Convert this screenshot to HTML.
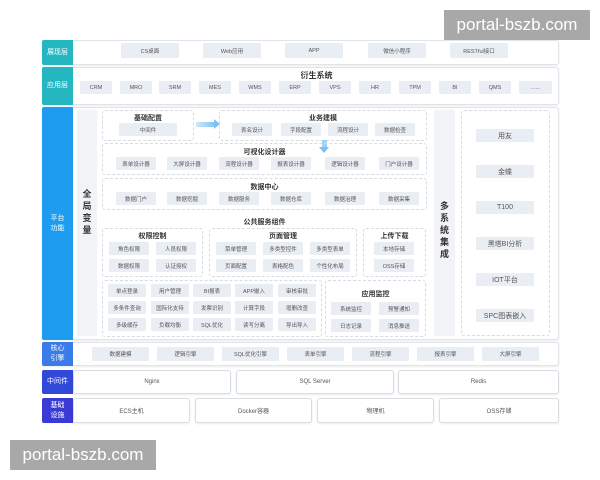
<!DOCTYPE html><html><head><meta charset="utf-8"><style>
*{margin:0;padding:0;box-sizing:border-box}
body{width:600px;height:480px;background:#fff;position:relative;overflow:hidden;font-family:"Liberation Sans","Noto Sans CJK SC",sans-serif;color:#333}
div{position:absolute}
.row{left:42px;width:517px;border:1px solid #dfe3ea;border-radius:3px;background:#fff;box-shadow:0 1px 2px rgba(0,0,0,.08)}
.lab{left:42px;width:31px;color:#fff;font-size:7px;display:flex;align-items:center;justify-content:center;text-align:center;line-height:10px;border-radius:2px 0 0 2px}
.it{background:#e9edf4;font-size:5.5px;color:#555;display:flex;align-items:center;justify-content:center;white-space:nowrap;border-radius:1px}
.db{border:1px dashed #d6dbe3;border-radius:3px}
.t{font-size:7px;font-weight:bold;color:#333;text-align:center;white-space:nowrap}
.wb{background:#fff;border:1px solid #d8dce3;border-radius:3px;font-size:6px;color:#555;display:flex;align-items:center;justify-content:center;box-shadow:0 1px 2px rgba(0,0,0,.08)}
.wm{background:#a8a8a8;color:#fff;font-size:17px;display:flex;align-items:center;justify-content:center}
</style></head><body>
<!-- row1 -->
<div class="row" style="top:40px;height:25px"></div>
<div class="lab" style="top:40px;height:25px;background:#24b7c2">展现层</div>
<div class="it" style="left:121px;top:43px;width:58px;height:15px">CS桌面</div>
<div class="it" style="left:203px;top:43px;width:58px;height:15px">Web应用</div>
<div class="it" style="left:285px;top:43px;width:58px;height:15px">APP</div>
<div class="it" style="left:368px;top:43px;width:58px;height:15px">微信小程序</div>
<div class="it" style="left:450px;top:43px;width:58px;height:15px">RESTful接口</div>
<!-- row2 -->
<div class="row" style="top:67px;height:38px"></div>
<div class="lab" style="top:67px;height:38px;background:#24b7c2">应用层</div>
<div class="t" style="left:74px;width:485px;top:70px;font-size:8px">衍生系统</div>
<div class="it" style="left:80px;top:81px;width:32px;height:13px">CRM</div>
<div class="it" style="left:120px;top:81px;width:32px;height:13px">MRO</div>
<div class="it" style="left:159px;top:81px;width:32px;height:13px">SRM</div>
<div class="it" style="left:199px;top:81px;width:32px;height:13px">MES</div>
<div class="it" style="left:239px;top:81px;width:32px;height:13px">WMS</div>
<div class="it" style="left:279px;top:81px;width:32px;height:13px">ERP</div>
<div class="it" style="left:319px;top:81px;width:32px;height:13px">VPS</div>
<div class="it" style="left:359px;top:81px;width:32px;height:13px">HR</div>
<div class="it" style="left:399px;top:81px;width:32px;height:13px">TPM</div>
<div class="it" style="left:439px;top:81px;width:32px;height:13px">BI</div>
<div class="it" style="left:479px;top:81px;width:32px;height:13px">QMS</div>
<div class="it" style="left:519px;top:81px;width:33px;height:13px">......</div>
<!-- platform -->
<div class="row" style="top:107px;height:233px"></div>
<div class="lab" style="top:107px;height:233px;background:#1e9df0">平台<br>功能</div>
<div style="left:77px;top:110px;width:20px;height:226px;background:#f1f3f7"></div>
<div class="t" style="left:77px;top:188px;width:20px;font-size:9px;line-height:12px">全<br>局<br>变<br>量</div>
<div class="db" style="left:102px;top:110px;width:92px;height:31px"></div>
<div class="t" style="left:102px;top:113px;width:92px">基础配置</div>
<div class="it" style="left:119px;top:123px;width:58px;height:13px">中间件</div>
<div style="left:196px;top:122px;width:20px;height:5px;background:linear-gradient(90deg,#cfe8f8,#7cc2f0)"></div>
<div style="left:214px;top:119px;width:0;height:0;border-left:6px solid #7cc2f0;border-top:5px solid transparent;border-bottom:5px solid transparent"></div>
<div class="db" style="left:219px;top:110px;width:208px;height:31px"></div>
<div class="t" style="left:219px;top:113px;width:208px">业务建模</div>
<div class="it" style="left:232px;top:123px;width:40px;height:13px">表名设计</div>
<div class="it" style="left:281px;top:123px;width:40px;height:13px">字段配置</div>
<div class="it" style="left:328px;top:123px;width:40px;height:13px">流程设计</div>
<div class="it" style="left:375px;top:123px;width:40px;height:13px">数据检查</div>
<div style="left:322px;top:140px;width:5px;height:7px;background:#9fd2f4"></div>
<div style="left:319px;top:147px;width:0;height:0;border-top:6px solid #7cc2f0;border-left:5.5px solid transparent;border-right:5.5px solid transparent"></div>
<div class="db" style="left:102px;top:143px;width:325px;height:32px"></div>
<div class="t" style="left:102px;top:147px;width:325px">可视化设计器</div>
<div class="it" style="left:116px;top:157px;width:40px;height:13px">表单设计器</div>
<div class="it" style="left:167px;top:157px;width:40px;height:13px">大屏设计器</div>
<div class="it" style="left:219px;top:157px;width:40px;height:13px">流程设计器</div>
<div class="it" style="left:271px;top:157px;width:40px;height:13px">报表设计器</div>
<div class="it" style="left:325px;top:157px;width:40px;height:13px">逻辑设计器</div>
<div class="it" style="left:379px;top:157px;width:40px;height:13px">门户设计器</div>
<div class="db" style="left:102px;top:178px;width:325px;height:32px"></div>
<div class="t" style="left:102px;top:182px;width:325px">数据中心</div>
<div class="it" style="left:116px;top:192px;width:40px;height:13px">数据门户</div>
<div class="it" style="left:167px;top:192px;width:40px;height:13px">数据挖掘</div>
<div class="it" style="left:219px;top:192px;width:40px;height:13px">数据服务</div>
<div class="it" style="left:271px;top:192px;width:40px;height:13px">数据仓库</div>
<div class="it" style="left:325px;top:192px;width:40px;height:13px">数据治理</div>
<div class="it" style="left:379px;top:192px;width:40px;height:13px">数据采集</div>
<div class="t" style="left:102px;top:217px;width:325px">公共服务组件</div>
<div class="db" style="left:102px;top:228px;width:101px;height:49px"></div>
<div class="t" style="left:102px;top:231px;width:101px">权限控制</div>
<div class="it" style="left:109px;top:242px;width:40px;height:13px">角色权限</div>
<div class="it" style="left:156px;top:242px;width:40px;height:13px">人员权限</div>
<div class="it" style="left:109px;top:259px;width:40px;height:13px">数据权限</div>
<div class="it" style="left:156px;top:259px;width:40px;height:13px">认证授权</div>
<div class="db" style="left:209px;top:228px;width:148px;height:49px"></div>
<div class="t" style="left:209px;top:231px;width:148px">页面管理</div>
<div class="it" style="left:216px;top:242px;width:40px;height:13px">菜单管理</div>
<div class="it" style="left:263px;top:242px;width:40px;height:13px">多类型控件</div>
<div class="it" style="left:310px;top:242px;width:40px;height:13px">多类型表单</div>
<div class="it" style="left:216px;top:259px;width:40px;height:13px">页面配置</div>
<div class="it" style="left:263px;top:259px;width:40px;height:13px">表格配色</div>
<div class="it" style="left:310px;top:259px;width:40px;height:13px">个性化布局</div>
<div class="db" style="left:363px;top:228px;width:63px;height:49px"></div>
<div class="t" style="left:363px;top:231px;width:63px">上传下载</div>
<div class="it" style="left:374px;top:242px;width:40px;height:13px">本地存储</div>
<div class="it" style="left:374px;top:259px;width:40px;height:13px">OSS存储</div>
<div class="db" style="left:102px;top:280px;width:220px;height:57px"></div>
<div class="it" style="left:108px;top:284px;width:38px;height:13px">单点登录</div>
<div class="it" style="left:151px;top:284px;width:38px;height:13px">用户管理</div>
<div class="it" style="left:193px;top:284px;width:38px;height:13px">BI报表</div>
<div class="it" style="left:235px;top:284px;width:38px;height:13px">APP嵌入</div>
<div class="it" style="left:278px;top:284px;width:38px;height:13px">审核审批</div>
<div class="it" style="left:108px;top:301px;width:38px;height:13px">多条件查询</div>
<div class="it" style="left:151px;top:301px;width:38px;height:13px">国际化支持</div>
<div class="it" style="left:193px;top:301px;width:38px;height:13px">发票识别</div>
<div class="it" style="left:235px;top:301px;width:38px;height:13px">计算字段</div>
<div class="it" style="left:278px;top:301px;width:38px;height:13px">增删改查</div>
<div class="it" style="left:108px;top:318px;width:38px;height:13px">多级缓存</div>
<div class="it" style="left:151px;top:318px;width:38px;height:13px">负载均衡</div>
<div class="it" style="left:193px;top:318px;width:38px;height:13px">SQL优化</div>
<div class="it" style="left:235px;top:318px;width:38px;height:13px">读写分离</div>
<div class="it" style="left:278px;top:318px;width:38px;height:13px">导出导入</div>
<div class="db" style="left:325px;top:280px;width:101px;height:57px"></div>
<div class="t" style="left:325px;top:289px;width:101px">应用监控</div>
<div class="it" style="left:331px;top:302px;width:40px;height:13px">系统监控</div>
<div class="it" style="left:379px;top:302px;width:40px;height:13px">预警通知</div>
<div class="it" style="left:331px;top:319px;width:40px;height:13px">日志记录</div>
<div class="it" style="left:379px;top:319px;width:40px;height:13px">消息推送</div>
<div style="left:434px;top:110px;width:21px;height:226px;background:#f1f3f7"></div>
<div class="t" style="left:434px;top:200px;width:21px;font-size:9px;line-height:12px">多<br>系<br>统<br>集<br>成</div>
<div class="db" style="left:461px;top:110px;width:89px;height:226px"></div>
<div class="it" style="left:476px;top:129px;width:58px;height:13px;font-size:7px">用友</div>
<div class="it" style="left:476px;top:165px;width:58px;height:13px;font-size:7px">金蝶</div>
<div class="it" style="left:476px;top:201px;width:58px;height:13px;font-size:7px">T100</div>
<div class="it" style="left:476px;top:237px;width:58px;height:13px;font-size:7px">黑塔BI分析</div>
<div class="it" style="left:476px;top:273px;width:58px;height:13px;font-size:7px">IOT平台</div>
<div class="it" style="left:476px;top:309px;width:58px;height:13px;font-size:7px">SPC图表嵌入</div>
<!-- core -->
<div class="row" style="top:342px;height:24px"></div>
<div class="lab" style="top:342px;height:24px;background:#3b7be8">核心<br>引擎</div>
<div class="it" style="left:92px;top:347px;width:57px;height:14px">数据建模</div>
<div class="it" style="left:157px;top:347px;width:57px;height:14px">逻辑引擎</div>
<div class="it" style="left:222px;top:347px;width:57px;height:14px">SQL优化引擎</div>
<div class="it" style="left:287px;top:347px;width:57px;height:14px">表单引擎</div>
<div class="it" style="left:352px;top:347px;width:57px;height:14px">流程引擎</div>
<div class="it" style="left:417px;top:347px;width:57px;height:14px">报表引擎</div>
<div class="it" style="left:482px;top:347px;width:57px;height:14px">大屏引擎</div>
<!-- middleware -->
<div class="lab" style="top:370px;height:24px;background:#3148d8">中间件</div>
<div class="wb" style="left:73px;top:370px;width:158px;height:24px">Nginx</div>
<div class="wb" style="left:236px;top:370px;width:158px;height:24px">SQL Server</div>
<div class="wb" style="left:398px;top:370px;width:161px;height:24px">Redis</div>
<!-- infra -->
<div class="lab" style="top:398px;height:25px;background:#3a3bd6">基础<br>设施</div>
<div class="wb" style="left:73px;top:398px;width:117px;height:25px">ECS主机</div>
<div class="wb" style="left:195px;top:398px;width:117px;height:25px">Docker容器</div>
<div class="wb" style="left:317px;top:398px;width:117px;height:25px">物理机</div>
<div class="wb" style="left:439px;top:398px;width:120px;height:25px">OSS存储</div>
<!-- watermarks -->
<div class="wm" style="left:444px;top:10px;width:146px;height:30px">portal-bszb.com</div>
<div class="wm" style="left:10px;top:440px;width:146px;height:30px">portal-bszb.com</div>
</body></html>
